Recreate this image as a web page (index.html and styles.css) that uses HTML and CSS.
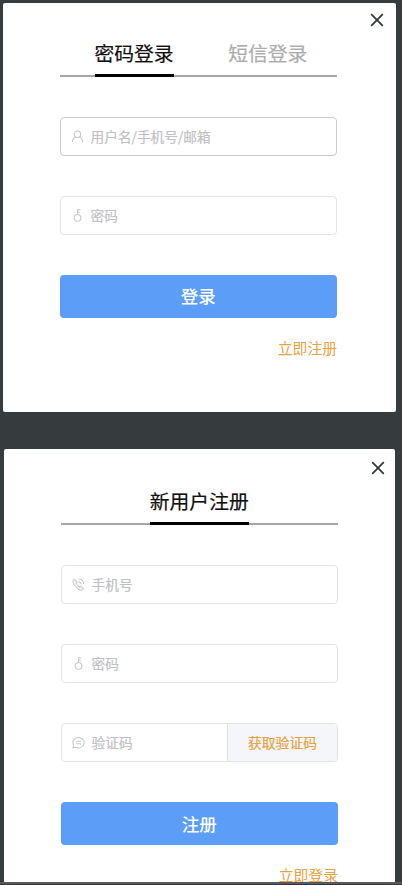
FILE: index.html
```
<!DOCTYPE html>
<html lang="zh-CN">
<head>
<meta charset="utf-8">
<title>登录 / 注册</title>
<link rel="stylesheet" href="styles.css">
</head>
<body>
<main class="page">
  <section class="panel login">
    <header class="panel-top">
      <button class="close" aria-label="关闭"><svg viewBox="0 0 14 14"><path d="M1.2 1.2 12.8 12.8M12.8 1.2 1.2 12.8"/></svg></button>
    </header>
    <form class="form">
      <nav class="tabs">
        <a class="tab active">密码登录</a>
        <a class="tab">短信登录</a>
      </nav>
      <label class="field hover">
        <svg class="icon" viewBox="0 0 14 14"><circle cx="7" cy="4.5" r="3.5"/><path d="M1.500 13c.1-2.900 1.500-4.600 3.700-5.200M12.500 13c-.1-2.900-1.500-4.600-3.700-5.200"/></svg>
        <span>用户名/手机号/邮箱</span>
      </label>
      <label class="field">
        <svg class="icon" viewBox="0 0 14 14"><circle cx="7" cy="9.600" r="3.600"/><path d="M7 6V.900h3M7 3.500h2.500"/></svg>
        <span>密码</span>
      </label>
      <button class="submit" type="button">登录</button>
      <a class="switch">立即注册</a>
    </form>
  </section>
  <section class="panel register">
    <header class="panel-top">
      <button class="close" aria-label="关闭"><svg viewBox="0 0 14 14"><path d="M1.2 1.2 12.8 12.8M12.8 1.2 1.2 12.8"/></svg></button>
    </header>
    <form class="form">
      <nav class="tabs single">
        <a class="tab active">新用户注册</a>
      </nav>
      <label class="field">
        <svg class="icon" viewBox="0 0 14 14"><path d="M2.700 1.500 1.300 2.800C.4 5.200 4.400 11.200 9 13.100c1.200.4 2.300-.2 3.300-1.600L9.600 9 8.200 10.100C6.500 9 5.200 7.300 4.300 5.500l1.200-1.300zM7 4c1.800.1 2.900 1.200 3 3M7.200 1.200c3.300.1 5.300 2.200 5.400 5.500"/></svg>
        <span>手机号</span>
      </label>
      <label class="field">
        <svg class="icon" viewBox="0 0 14 14"><circle cx="7" cy="9.600" r="3.600"/><path d="M7 6V.900h3M7 3.500h2.500"/></svg>
        <span>密码</span>
      </label>
      <div class="field code">
        <svg class="icon" viewBox="0 0 14 14"><path d="M1.100 12.600 1.700 9.700A6 5.600 0 1 1 4.200 12.100zM4.500 5.700h5.200M4.500 8.300h5.200"/></svg>
        <span>验证码</span>
        <button class="get-code" type="button">获取验证码</button>
      </div>
      <button class="submit" type="button">注册</button>
      <a class="switch">立即登录</a>
    </form>
  </section>
</main>
</body>
</html>
```
FILE: styles.css
```
* {
  box-sizing: border-box;
}

body {
  margin: 0;
  background: #363b3e;
  font-family: "Noto Sans CJK SC", sans-serif;
}

.page {
  height: 885px;
  padding: 3px 6px 0 3px;
  overflow: hidden;
  border-bottom: 1px solid #35383c;
}

.page::after {
  content: "";
  display: block;
  height: 2px;
  margin: 0 -6px 0 -3px;
  background: #58595c;
}

.panel {
  background: #fff;
  border-radius: 2px;
  overflow: hidden;
}

.login {
  height: 409px;
}

.register {
  height: 433px;
  margin: 37px 1px 0;
  border-radius: 2px 2px 0 0;
}

.panel-top {
  display: flex;
  justify-content: flex-end;
  height: 30px;
  padding: 10px 12.500px 0 0;
}

.register .panel-top {
  height: 32px;
  padding: 12px 10.500px 0 0;
}

button {
  border: 0;
  padding: 0;
  font-family: inherit;
}

.close {
  width: 14px;
  height: 14px;
  background: none;
}

.close svg {
  display: block;
  width: 14px;
  height: 14px;
  fill: none;
  stroke: #35383b;
  stroke-width: 1.8;
}

.form {
  display: flex;
  flex-direction: column;
  width: 277.500px;
  margin-left: 56.500px;
}

.tabs {
  display: flex;
  gap: 54.500px;
  height: 44px;
  padding-left: 35px;
  margin-bottom: 39.500px;
  background: linear-gradient(#a6a6a6, #a6a6a6) 0 42px / 100% 2px no-repeat;
}

.register .tabs {
  margin-bottom: 39.500px;
}

.single {
  justify-content: center;
  padding-left: 0;
}

.tab {
  height: 44px;
  color: #acacac;
  font-size: 19.800px;
  line-height: 39px;
  white-space: nowrap;
  -webkit-text-stroke: .2px currentColor;
}

.active {
  color: #111;
  border-bottom: 3px solid #000;
}

.field {
  display: flex;
  align-items: center;
  height: 39.500px;
  margin-bottom: 39.600px;
  padding-left: 10.500px;
  border: 1px solid #e2e3e6;
  border-radius: 4px;
  color: #bfc1c6;
  font-size: 13.700px;
  line-height: 20px;
}

.field span {
  padding-bottom: 1px;
  -webkit-text-stroke: .2px currentColor;
}

.hover {
  border-color: #c9cacf;
}

.icon {
  width: 13px;
  height: 13px;
  margin-right: 6.500px;
  fill: none;
  stroke: #c3c5c9;
  stroke-width: 1.1;
}

.code {
  overflow: hidden;
}

.get-code {
  width: 110px;
  height: 100%;
  padding-bottom: 1px;
  margin-left: auto;
  border-left: 1px solid #e0e2e6;
  background: #f4f6fa;
  color: #e8a23f;
  font-size: 13.800px;
  -webkit-text-stroke: .2px currentColor;
}

.submit {
  height: 43.500px;
  border-radius: 4px;
  background: #5b9df7;
  color: #fff;
  font-size: 17.500px;
  font-weight: 500;
  line-height: 42px;
}

.switch {
  align-self: flex-end;
  margin-top: 19px;
  color: #e8a23f;
  font-size: 14.800px;
  line-height: 22px;
}
```
